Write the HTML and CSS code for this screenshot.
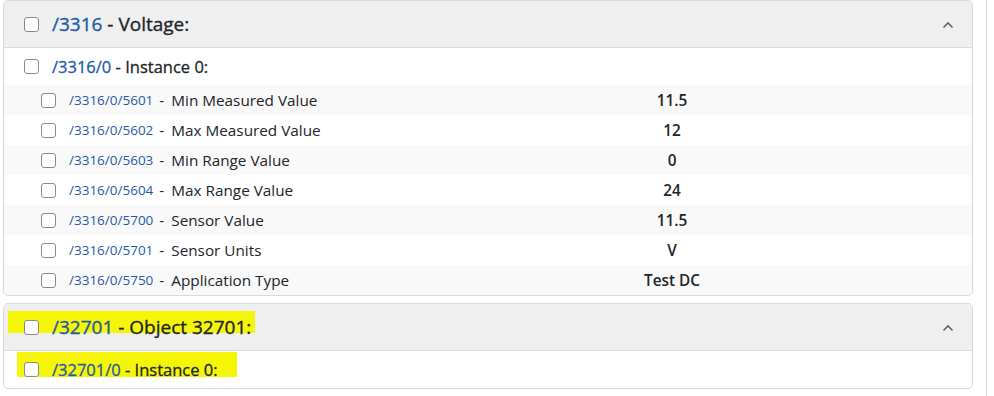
FILE: index.html
```html
<!DOCTYPE html>
<html lang="en">
<head>
<meta charset="utf-8">
<title>LwM2M Objects</title>
<link rel="stylesheet" href="styles.css">
</head>
<body>
<div class="page">
  <div class="list">
    <section class="card">
      <header class="card-header">
        <span class="title">
          <span class="cb"></span>
          <a class="path">/3316</a><span class="name"> - Voltage:</span>
        </span>
        <svg class="chev" width="12" height="8" viewBox="0 0 12 8"><path d="M1.5 6.5 L6 2 L10.5 6.5" fill="none" stroke="#5c6670" stroke-width="1.6"/></svg>
      </header>
      <div class="instance">
        <span class="cb"></span>
        <a class="path">/3316/0</a><span class="name"> - Instance 0:</span>
      </div>
      <div class="rows">
        <div class="row"><div class="res"><span class="cb"></span><a class="path">/3316/0/5601</a><span class="sep">-</span><span class="label">Min Measured Value</span></div><div class="val">11.5</div></div>
        <div class="row"><div class="res"><span class="cb"></span><a class="path">/3316/0/5602</a><span class="sep">-</span><span class="label">Max Measured Value</span></div><div class="val">12</div></div>
        <div class="row"><div class="res"><span class="cb"></span><a class="path">/3316/0/5603</a><span class="sep">-</span><span class="label">Min Range Value</span></div><div class="val">0</div></div>
        <div class="row"><div class="res"><span class="cb"></span><a class="path">/3316/0/5604</a><span class="sep">-</span><span class="label">Max Range Value</span></div><div class="val">24</div></div>
        <div class="row"><div class="res"><span class="cb"></span><a class="path">/3316/0/5700</a><span class="sep">-</span><span class="label">Sensor Value</span></div><div class="val">11.5</div></div>
        <div class="row"><div class="res"><span class="cb"></span><a class="path">/3316/0/5701</a><span class="sep">-</span><span class="label">Sensor Units</span></div><div class="val">V</div></div>
        <div class="row"><div class="res"><span class="cb"></span><a class="path">/3316/0/5750</a><span class="sep">-</span><span class="label">Application Type</span></div><div class="val">Test DC</div></div>
      </div>
    </section>
    <section class="card">
      <header class="card-header">
        <span class="title mark mark-h">
          <span class="cb"></span>
          <a class="path">/32701</a><span class="name"> - Object 32701:</span>
        </span>
        <svg class="chev" width="12" height="8" viewBox="0 0 12 8"><path d="M1.5 6.5 L6 2 L10.5 6.5" fill="none" stroke="#5c6670" stroke-width="1.6"/></svg>
      </header>
      <div class="instance">
        <span class="mark mark-i">
          <span class="cb"></span>
          <a class="path">/32701/0</a><span class="name"> - Instance 0:</span>
        </span>
      </div>
    </section>
  </div>
  <div class="scroll-edge"></div>
</div>
</body>
</html>
```

FILE: styles.css
```css
* { box-sizing: border-box; }
html, body { margin: 0; padding: 0; background: #fff; }
body {
  font-family: "Open Sans", "Noto Sans", "Liberation Sans", sans-serif;
  color: #212529;
  height: 396px;
  overflow: hidden;
}
.page {
  display: flex;
  height: 396px;
  padding-left: 3px;
}
.list {
  width: 970px;
  display: flex;
  flex-direction: column;
  gap: 7px;
}
.scroll-edge {
  margin-left: 13px;
  width: 1px;
  background: #dedede;
  height: 396px;
}
.card {
  border: 1px solid #d9d9d9;
  border-radius: 5px;
  overflow: hidden;
  background: #fff;
}
.card-header {
  height: 47px;
  background: #efefef;
  border-bottom: 1px solid #d9d9d9;
  display: flex;
  align-items: center;
  justify-content: space-between;
  padding: 0 18px 0 20px;
}
.title {
  display: flex;
  align-items: center;
  font-size: 19px;
  font-weight: 500;
  -webkit-text-stroke: 0.35px currentColor;
}
.cb {
  display: inline-block;
  width: 15px;
  height: 15px;
  border: 1px solid #8a8a8a;
  border-radius: 3px;
  background: #fff;
  flex: none;
  -webkit-text-stroke: 0;
}
.title .cb { margin-right: 13px; }
.path { color: #1f5aa6; text-decoration: none; }
.name { white-space: pre; color: #212529; }
.chev { display: block; margin-top: 1px; }
.instance {
  height: 37px;
  display: flex;
  align-items: center;
  padding-left: 20px;
  font-size: 16.5px;
  font-weight: 500;
  -webkit-text-stroke: 0.3px currentColor;
}
.instance .cb { margin-right: 13px; }
.rows { display: flex; flex-direction: column; -webkit-text-stroke: 0; }
.row {
  height: 30px;
  display: grid;
  grid-template-columns: 368px 1fr;
  align-items: center;
  font-size: 15.3px;
}
.row:nth-child(odd) { background: #f9f9f9; }
.res {
  display: flex;
  align-items: center;
  padding-left: 37px;
}
.res .cb { margin-right: 13px; }
.res .path { font-size: 13.5px; }
.sep { margin: 0 7px 0 6px; }
.val {
  text-align: center;
  font-weight: 600;
}
.mark {
  position: relative;
  z-index: 0;
}
.mark::before {
  content: "";
  position: absolute;
  z-index: -1;
  top: 50%;
  background: #f5f507;
}
.mark-h::before {
  left: -16px;
  width: 247px;
  margin-top: -16.5px;
  height: 22px;
}
.mark-i {
  display: flex;
  align-items: center;
}
.mark-i::before {
  left: -7px;
  width: 220px;
  margin-top: -18px;
  height: 25px;
}
```
